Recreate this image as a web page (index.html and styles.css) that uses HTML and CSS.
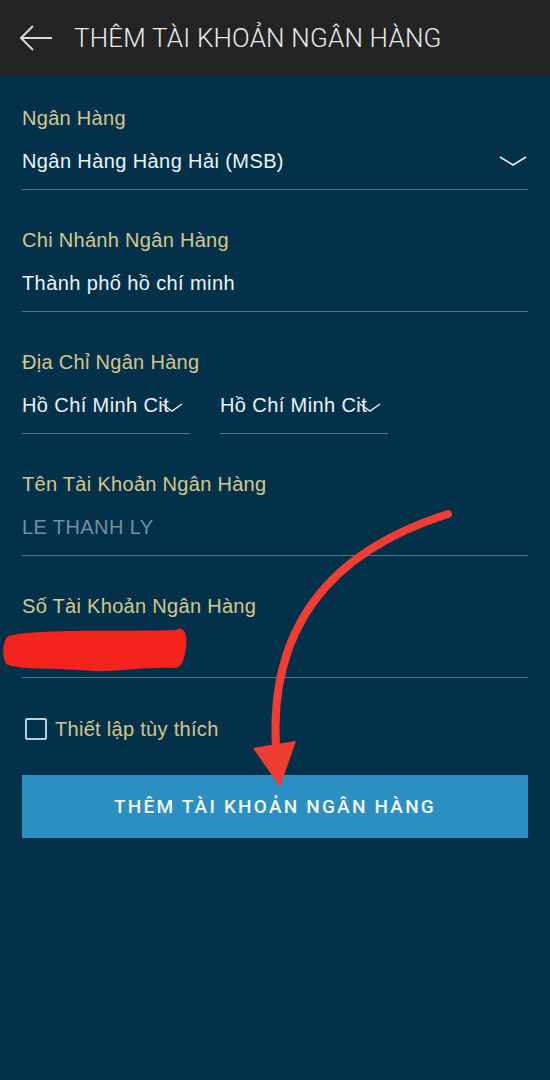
FILE: index.html
```html
<!DOCTYPE html>
<html lang="vi">
<head>
  <meta charset="UTF-8">
  <meta name="viewport" content="width=device-width, initial-scale=1.0">
  <title>Thêm tài khoản ngân hàng</title>
  <link rel="stylesheet" href="styles.css">
</head>
<body>
  <div class="topbar">
    <svg class="back" width="34" height="30" viewBox="0 0 34 30">
      <path d="M33 15 H3 M14 3 L2 15 L14 27" fill="none" stroke="#d8d8d8" stroke-width="2"/>
    </svg>
    <h1>THÊM TÀI KHOẢN NGÂN HÀNG</h1>
  </div>

  <div class="form">
    <div class="field">
      <div class="label">Ngân Hàng</div>
      <div class="value select">
        <span>Ngân Hàng Hàng Hải (MSB)</span>
        <svg class="chev" width="28" height="12" viewBox="0 0 28 12"><path d="M1 2 L14 10 L27 2" fill="none" stroke="#e6eef2" stroke-width="1.5"/></svg>
      </div>
    </div>

    <div class="field">
      <div class="label">Chi Nhánh Ngân Hàng</div>
      <div class="value">Thành phố hồ chí minh</div>
    </div>

    <div class="field">
      <div class="label">Địa Chỉ Ngân Hàng</div>
      <div class="row">
        <div class="value select half">
          <span>Hồ Chí Minh Cit</span>
          <svg class="chev small" width="22" height="10" viewBox="0 0 22 10"><path d="M1 2 L11 9 L21 2" fill="none" stroke="#e6eef2" stroke-width="1.5"/></svg>
        </div>
        <div class="value select half">
          <span>Hồ Chí Minh Cit</span>
          <svg class="chev small" width="22" height="10" viewBox="0 0 22 10"><path d="M1 2 L11 9 L21 2" fill="none" stroke="#e6eef2" stroke-width="1.5"/></svg>
        </div>
      </div>
    </div>

    <div class="field">
      <div class="label">Tên Tài Khoản Ngân Hàng</div>
      <div class="value muted">LE THANH LY</div>
    </div>

    <div class="field">
      <div class="label">Số Tài Khoản Ngân Hàng</div>
      <div class="value">&nbsp;</div>
    </div>

    <label class="check">
      <span class="box"></span>
      <span>Thiết lập tùy thích</span>
    </label>

    <button class="submit">THÊM TÀI KHOẢN NGÂN HÀNG</button>
  </div>

  <svg class="marks" width="550" height="1080" viewBox="0 0 550 1080">
    <path d="M8 636 C40 628 120 632 176 630 C184 624 188 636 186 648 C184 660 182 668 174 668 C140 666 110 674 80 670 C50 668 20 670 6 664 C2 656 2 642 8 636 Z" fill="#f2231c"/>
    <path d="M448 514 C350 545 268 610 276 748" fill="none" stroke="#ef3d33" stroke-width="8" stroke-linecap="round"/>
    <path d="M253 748 L296 741 L280 787 Z" fill="#ef3d33"/>
  </svg>
</body>
</html>
```

FILE: styles.css
```css
body {
  margin: 0;
  background: #03314a;
  font-family: "Liberation Sans", Arial, sans-serif;
  width: 550px;
  height: 1080px;
  position: relative;
  overflow: hidden;
}
.topbar {
  height: 76px;
  background: #232323;
  display: flex;
  align-items: center;
  padding-left: 19px;
}
.back {
  margin-right: 21px;
}
.topbar h1 {
  margin: 0;
  font-family: Roboto, "Liberation Sans", sans-serif;
  font-weight: 300;
  font-size: 26px;
  color: #ececec;
  letter-spacing: 0.2px;
}
.form {
  padding: 29px 22px 0 22px;
}
.field {
  height: 122px;
}
.label {
  color: #d6c78a;
  font-size: 20px;
  line-height: 26px;
  letter-spacing: 0.3px;
}
.value {
  color: #eef3f6;
  font-size: 20px;
  line-height: 26px;
  letter-spacing: 0.4px;
  padding: 17px 0 15px;
  border-bottom: 1.5px solid #4a7489;
}
.value.muted {
  color: #71909f;
}
.select {
  display: flex;
  align-items: center;
  justify-content: space-between;
}
.chev {
  margin-right: 1px;
}
.row {
  display: flex;
  gap: 30px;
}
.half {
  width: 168px;
  justify-content: flex-start;
  white-space: nowrap;
}
.chev.small {
  margin-left: -8px;
  margin-top: 4px;
}
.check {
  display: flex;
  align-items: center;
  gap: 8px;
  margin-top: 2px;
  padding-left: 3px;
  color: #d6c78a;
  font-size: 20px;
  letter-spacing: 0.3px;
  height: 24px;
}
.box {
  width: 18px;
  height: 18px;
  border: 2px solid #b9cfda;
  border-radius: 2px;
}
.submit {
  display: block;
  width: 100%;
  height: 63px;
  margin-top: 34px;
  background: #2b8fc1;
  border: none;
  color: #f4f8fa;
  font-family: Roboto, "Liberation Sans", sans-serif;
  font-size: 19px;
  font-weight: 500;
  letter-spacing: 2.2px;
}
.marks {
  position: absolute;
  left: 0;
  top: 0;
  pointer-events: none;
}
```
